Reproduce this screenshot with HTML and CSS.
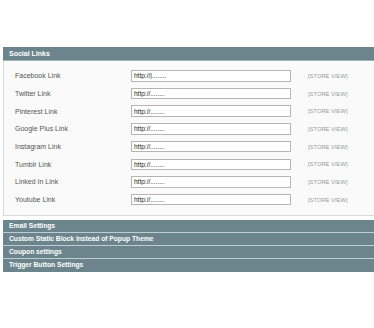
FILE: index.html
```html
<!DOCTYPE html>
<html lang="en">

<head>
    <meta charset="UTF-8">
    <meta name="viewport" content="width=device-width, initial-scale=1.0">
    <title>Social Links</title>
    <link rel="stylesheet" href="styles.css">
</head>

<body>
    <div id="main">
        <div class="section-head">Social Links</div>
        <div class="fieldset">
            <div class="row">
                <label>Facebook Link</label>
                <input type="text" value="http://|........">
                <span class="scope">[STORE VIEW]</span>
            </div>
            <div class="row">
                <label>Twitter Link</label>
                <input type="text" value="http://........">
                <span class="scope">[STORE VIEW]</span>
            </div>
            <div class="row">
                <label>Pinterest Link</label>
                <input type="text" value="http://........">
                <span class="scope">[STORE VIEW]</span>
            </div>
            <div class="row">
                <label>Google Plus Link</label>
                <input type="text" value="http://........">
                <span class="scope">[STORE VIEW]</span>
            </div>
            <div class="row">
                <label>Instagram Link</label>
                <input type="text" value="http://........">
                <span class="scope">[STORE VIEW]</span>
            </div>
            <div class="row">
                <label>Tumblr Link</label>
                <input type="text" value="http://........">
                <span class="scope">[STORE VIEW]</span>
            </div>
            <div class="row">
                <label>Linked In Link</label>
                <input type="text" value="http://........">
                <span class="scope">[STORE VIEW]</span>
            </div>
            <div class="row">
                <label>Youtube Link</label>
                <input type="text" value="http://........">
                <span class="scope">[STORE VIEW]</span>
            </div>
        </div>

        <div class="collapsed">
            <div class="bar">Email Settings</div>
            <div class="bar">Custom Static Block Instead of Popup Theme</div>
            <div class="bar">Coupon settings</div>
            <div class="bar">Trigger Button Settings</div>
        </div>
    </div>
</body>

</html>
```

FILE: styles.css
```css
body {
    margin: 0;
    background-color: white;
    font-family: 'Liberation Sans', Arial, sans-serif;
    overflow: hidden;
}

#main {
    width: 380px;
    padding-top: 47px;
    padding-left: 3px;
}

.section-head {
    height: 13px;
    line-height: 13px;
    padding-left: 6px;
    background-color: #6c858d;
    border-bottom: 1px solid #9fb3ba;
    color: white;
    font-size: 7px;
    font-weight: bold;
}

.fieldset {
    background-color: #fafafa;
    border: 1px solid #dadada;
    border-top: none;
    padding: 6px 0 6px 11px;
}

.row {
    display: flex;
    align-items: center;
    height: 17.7px;
}

.row>label {
    width: 116px;
    font-size: 7px;
    color: #555;
}

.row>input {
    box-sizing: border-box;
    width: 160px;
    height: 11.5px;
    padding: 0 2px;
    border: 1px solid #b5b5b5;
    background: white;
    font-family: 'Liberation Sans', Arial, sans-serif;
    font-size: 6.5px;
    color: #222;
}

.scope {
    margin-left: 17px;
    font-size: 5.8px;
    color: #9a9a9a;
}

.collapsed {
    margin-top: 4px;
}

.bar {
    height: 12px;
    line-height: 12px;
    padding-left: 6px;
    background-color: #6c858d;
    border-bottom: 1px solid #bccdd3;
    color: white;
    font-size: 6.7px;
    font-weight: bold;
}

.bar:last-child {
    border-bottom: none;
    height: 13px;
}
```
